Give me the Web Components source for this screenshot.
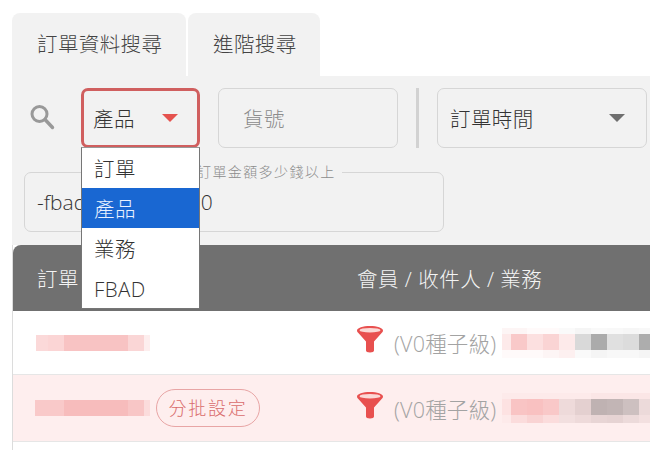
<!DOCTYPE html>
<html lang="zh-Hant">
<head>
<meta charset="utf-8">
<title>訂單資料搜尋</title>
<style>
html, body { margin: 0; padding: 0; background: #fff; overflow: hidden; }
body {
    width: 650px; height: 450px;
    font-family: "Open Sans", "Noto Sans CJK TC", sans-serif;
    font-weight: 300;
    color: #333;
}
.level { font-size: 21.500px; letter-spacing: .2px; color: #a3a3a3; white-space: nowrap; margin: 0 -2px 0 2px; }
</style>
</head>
<body>
<search-page>
    <filter-tabs slot="tabs">
        <tab-item>訂單資料搜尋</tab-item>
        <tab-item style="width:132px">進階搜尋</tab-item>
    </filter-tabs>
    <filter-panel slot="panel">
        <search-glass></search-glass>
        <drop-select label="產品" focused>
            <drop-option>訂單</drop-option>
            <drop-option selected>產品</drop-option>
            <drop-option>業務</drop-option>
            <drop-option>FBAD</drop-option>
        </drop-select>
        <text-field placeholder="貨號"></text-field>
        <v-divider></v-divider>
        <drop-select label="訂單時間" style="width:210px"></drop-select>
        <legend-field legend="訂單金額多少錢以上" value="-fbad-0000000000"></legend-field>
    </filter-panel>
    <order-table slot="table">
        <table-head>
            <span>訂單</span>
            <span>會員 / 收件人 / 業務</span>
        </table-head>
        <table-row>
            <blur-strip slot="order" cells="fbd9d9:12 fbd5d5:16 f8c3c3:16 f8c3c3:16 f8c3c3:16 f8c3c3:16 fad6d6:16 fdeeee:6"></blur-strip>
            <funnel-icon slot="member"></funnel-icon>
            <span slot="member" class="level">(V0種子級)</span>
            <blur-strip slot="member" variant="a"></blur-strip>
        </table-row>
        <table-row tint>
            <blur-strip slot="order" cells="f9c9c9:13 f9c9c9:16 f7bcbc:16 f7bcbc:16 f7bcbc:16 f7bcbc:16 f8c6c6:16 fbdcdc:6"></blur-strip>
            <pill-tag slot="order">分批設定</pill-tag>
            <funnel-icon slot="member"></funnel-icon>
            <span slot="member" class="level">(V0種子級)</span>
            <blur-strip slot="member" variant="b"></blur-strip>
        </table-row>
    </order-table>
</search-page>

<script>
function shadow(el, html) {
    el.attachShadow({ mode: 'open' });
    el.shadowRoot.innerHTML = html;
}

class SearchPage extends HTMLElement {
    connectedCallback() {
        shadow(this, `
            <style>
                :host { display: flex; flex-direction: column; padding: 13px 0 0 12px; }
            </style>
            <slot name="tabs"></slot>
            <slot name="panel"></slot>
            <slot name="table"></slot>
        `);
    }
}

class FilterTabs extends HTMLElement {
    connectedCallback() {
        shadow(this, `
            <style>
                :host { display: flex; gap: 2px; height: 63px; }
            </style>
            <slot></slot>
        `);
    }
}

class TabItem extends HTMLElement {
    connectedCallback() {
        shadow(this, `
            <style>
                :host {
                    display: block;
                    box-sizing: border-box;
                    width: 174px;
                    padding: 16px 0 0 25px;
                    background: #f2f2f2;
                    border-radius: 8px 8px 0 0;
                    font-size: 20.500px;
                    line-height: 30px;
                    letter-spacing: .4px;
                    color: #444;
                }
            </style>
            <slot></slot>
        `);
    }
}

class FilterPanel extends HTMLElement {
    connectedCallback() {
        shadow(this, `
            <style>
                :host {
                    display: flex;
                    flex-wrap: wrap;
                    align-items: center;
                    box-sizing: border-box;
                    width: 638px;
                    height: 169px;
                    align-content: flex-start;
                    padding: 12px 0 0 12px;
                    background: #f2f2f2;
                    column-gap: 18px;
                    row-gap: 24px;
                }
            </style>
            <slot></slot>
        `);
    }
}

class SearchGlass extends HTMLElement {
    connectedCallback() {
        shadow(this, `
            <style>
                :host { display: flex; width: 45px; margin-right: -6px; padding: 0 0 2px 5px; box-sizing: border-box; }
                svg { display: block; }
            </style>
            <svg width="26" height="26" viewBox="0 0 26 26" fill="none" stroke="#999" stroke-width="3">
                <circle cx="10.500" cy="10" r="7.500"/>
                <path d="M16 15.500l7.500 8" stroke-width="3.400" stroke-linecap="round"/>
            </svg>
        `);
    }
}

class DropSelect extends HTMLElement {
    connectedCallback() {
        const focused = this.hasAttribute('focused');
        shadow(this, `
            <style>
                :host {
                    display: block;
                    position: relative;
                    width: 119px;
                    height: 60px;
                    font-size: 20.500px;
                    letter-spacing: .4px;
                    color: #333;
                }
                .box {
                    display: flex;
                    align-items: center;
                    justify-content: space-between;
                    box-sizing: border-box;
                    height: 100%;
                    padding: 0 21px 0 12px;
                    border: 1px solid #d6d6d6;
                    border-radius: 7px;
                }
                .box.focused {
                    border: 3px solid #d05f5f;
                    padding: 0 19px 0 9px;
                }
                .arrow {
                    width: 0; height: 0;
                    border-left: 8px solid transparent;
                    border-right: 8px solid transparent;
                    border-top: 8px solid #6f6f6f;
                }
                .focused .arrow { border-top-color: #e5534f; }
                .menu {
                    position: absolute;
                    top: 59px;
                    left: 0;
                    right: 0;
                    z-index: 5;
                    background: #fff;
                    border: 1px solid #767676;
                    border-top-color: #999;
                    display: ${focused ? 'block' : 'none'};
                }
            </style>
            <div class="box ${focused ? 'focused' : ''}">
                <span>${this.getAttribute('label')}</span>
                <i class="arrow"></i>
            </div>
            <div class="menu"><slot></slot></div>
        `);
    }
}

class DropOption extends HTMLElement {
    connectedCallback() {
        const on = this.hasAttribute('selected');
        shadow(this, `
            <style>
                :host {
                    display: block;
                    height: 40px;
                    line-height: 42px;
                    padding-left: 12px;
                    background: ${on ? '#1967d2' : 'transparent'};
                    color: ${on ? '#e8f1ff' : '#333'};
                }
            </style>
            <slot></slot>
        `);
    }
}

class TextField extends HTMLElement {
    connectedCallback() {
        shadow(this, `
            <style>
                :host {
                    display: flex;
                    align-items: center;
                    box-sizing: border-box;
                    width: 180px;
                    height: 60px;
                    padding-left: 24px;
                    border: 1px solid #d6d6d6;
                    border-radius: 7px;
                    font-size: 20.500px;
                    letter-spacing: .4px;
                    color: #8c8c8c;
                }
            </style>
            <span>${this.getAttribute('placeholder')}</span>
        `);
    }
}

class VDivider extends HTMLElement {
    connectedCallback() {
        shadow(this, `
            <style>
                :host { display: block; width: 3px; height: 60px; background: #d2d2d2; }
            </style>
        `);
    }
}

class LegendField extends HTMLElement {
    connectedCallback() {
        shadow(this, `
            <style>
                :host {
                    display: flex;
                    align-items: center;
                    position: relative;
                    box-sizing: border-box;
                    width: 420px;
                    height: 60px;
                    padding-left: 12px;
                    border: 1px solid #d6d6d6;
                    border-radius: 7px;
                    font-size: 21px;
                    color: #333;
                }
                .legend {
                    position: absolute;
                    top: -9px;
                    left: 168px;
                    padding: 0 6px 0 4px;
                    background: #f2f2f2;
                    font-size: 14px;
                    line-height: 16px;
                    letter-spacing: 1.400px;
                    color: #8c8c8c;
                }
            </style>
            <span class="legend">${this.getAttribute('legend')}</span>
            <span>${this.getAttribute('value')}</span>
        `);
    }
}

class OrderTable extends HTMLElement {
    connectedCallback() {
        shadow(this, `
            <style>
                :host {
                    display: block;
                    width: 638px;
                    height: 205px;
                    border-left: 1px solid #dcdcdc;
                }
            </style>
            <slot></slot>
        `);
    }
}

class TableHead extends HTMLElement {
    connectedCallback() {
        shadow(this, `
            <style>
                :host {
                    display: grid;
                    grid-template-columns: 320px 1fr;
                    align-items: center;
                    height: 66px;
                    padding: 0 0 1px 24px;
                    box-sizing: border-box;
                    background: #707070;
                    border-radius: 8px 0 0 0;
                    font-size: 20.500px;
                    letter-spacing: .500px;
                    color: #f4f4f4;
                }
            </style>
            <slot></slot>
        `);
    }
}

class TableRow extends HTMLElement {
    connectedCallback() {
        const tint = this.hasAttribute('tint');
        shadow(this, `
            <style>
                :host {
                    display: grid;
                    grid-template-columns: ${tint ? 322 : 321}px 1fr;
                    align-items: center;
                    box-sizing: border-box;
                    height: ${tint ? 67 : 64}px;
                    padding-left: ${tint ? 22 : 23}px;
                    background: ${tint ? '#feeeee' : '#fff'};
                    border-bottom: 1px solid #e6e6e6;
                }
                .cell { display: flex; align-items: center; }
                .member { gap: 8px; }
                .order { gap: 6px; }
            </style>
            <div class="cell order"><slot name="order"></slot></div>
            <div class="cell member"><slot name="member"></slot></div>
        `);
    }
}

class BlurStrip extends HTMLElement {
    connectedCallback() {
        const variant = this.getAttribute('variant');
        let body = '';
        if (variant) {
            const rows = variant === 'a'
                ? [['fdf5f5','fdf5f5','fffafa','fffafa','fafafa','f5f5f5','f9f9f9','f8f8f8','f6f6f6','f8f8f8'],
                   ['fdeaea','f9c9c9','fce0e0','fad4d4','fdeaea','d9d9d9','ababab','e0e0e0','dcdcdc','adadad'],
                   ['fffafa','fffafa','fffafa','fdf5f5','fdf0f0','fafafa','f5f5f5','f8f8f8','f8f8f8','f5f5f5']]
                : [['fdeaea','fdeaea','fdeaea','fdeaea','fdeaea','fdeaea','fbe6e6','fbe6e6','fbe6e6','fbe6e6'],
                   ['fde2e2','f9c4c4','f9c1c1','f9c8c8','eedada','e4d0d0','bfb2b2','c2b5b5','cdc0c0','ecdada'],
                   ['fdeaea','fbdcdc','f9d3d3','fbdcdc','f2dfdf','eedada','e8d5d5','e6d3d3','ecdada','f3e0e0']];
            const heights = [6, 16, 8];
            body = rows.map((r, i) => `<div class="row" style="height:${heights[i]}px">` +
                r.map((c, j) => `<i style="background:#${c};width:${j === 0 ? 9 : 16}px"></i>`).join('') + '</div>').join('');
        } else {
            body = '<div class="row" style="height:16px">' +
                this.getAttribute('cells').split(' ').map(s => {
                    const [c, w] = s.split(':');
                    return `<i style="background:#${c};width:${w}px"></i>`;
                }).join('') + '</div>';
        }
        shadow(this, `
            <style>
                :host { display: block; }
                .row { display: flex; }
                i { display: block; height: 100%; flex: none; }
            </style>
            ${body}
        `);
    }
}

class FunnelIcon extends HTMLElement {
    connectedCallback() {
        shadow(this, `
            <style>
                :host { display: block; margin: -7px 0 0 -1px; }
                svg { display: block; }
            </style>
            <svg width="28" height="28" viewBox="0 0 28 28">
                <path fill="#e8504f" d="M1 5.500C1 3 7 1 14 1s13 2 13 4.500c0 1-.6 1.900-1.600 2.700L18 16.500V25.500c0 1.200-1.400 2-4 2s-4-.8-4-2V16.500L2.600 8.200C1.600 7.400 1 6.500 1 5.500z"/>
                <ellipse cx="14" cy="5.200" rx="10.500" ry="2.300" fill="#fbd9d6"/>
            </svg>
        `);
    }
}

class PillTag extends HTMLElement {
    connectedCallback() {
        shadow(this, `
            <style>
                :host {
                    display: block;
                    box-sizing: border-box;
                    width: 104px;
                    height: 38px;
                    line-height: 36px;
                    text-align: center;
                    border: 1px solid #e8a5a5;
                    border-radius: 19px;
                    font-size: 18px;
                    letter-spacing: 1.800px;
                    color: #d96c6c;
                }
            </style>
            <slot></slot>
        `);
    }
}

customElements.define('search-page', SearchPage);
customElements.define('filter-tabs', FilterTabs);
customElements.define('tab-item', TabItem);
customElements.define('filter-panel', FilterPanel);
customElements.define('search-glass', SearchGlass);
customElements.define('drop-select', DropSelect);
customElements.define('drop-option', DropOption);
customElements.define('text-field', TextField);
customElements.define('v-divider', VDivider);
customElements.define('legend-field', LegendField);
customElements.define('order-table', OrderTable);
customElements.define('table-head', TableHead);
customElements.define('table-row', TableRow);
customElements.define('blur-strip', BlurStrip);
customElements.define('funnel-icon', FunnelIcon);
customElements.define('pill-tag', PillTag);
</script>
</body>
</html>
